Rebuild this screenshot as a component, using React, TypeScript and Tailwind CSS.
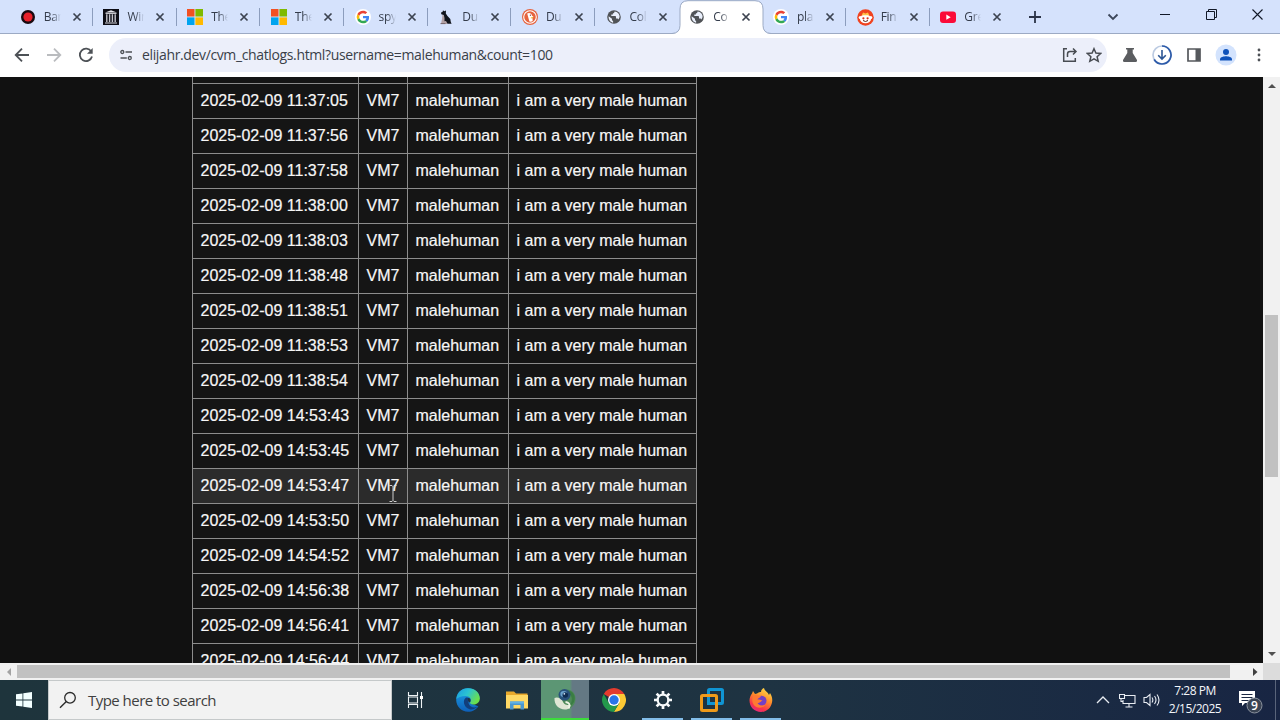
import type { ReactNode } from "react";

const UI = "font-['Open_Sans','Noto_Sans',sans-serif]";

/* ---------- favicons ---------- */

const RecordIcon = () => (
  <svg width="16" height="16" viewBox="0 0 16 16">
    <circle cx="8" cy="8" r="7" fill="#1a0a10" />
    <circle cx="8" cy="8" r="4.6" fill="#e8212b" />
  </svg>
);

const ArchiveIcon = () => (
  <svg width="16" height="16" viewBox="0 0 16 16">
    <rect width="16" height="16" fill="#0c0c14" />
    <path d="M8 1.2 14 3.6H2z" fill="#e4e4ea" />
    <path d="M2.5 4.4h11M2 14h12" stroke="#d8d8de" strokeWidth="1" />
    <path d="M3.8 5.2v7.8M6.6 5.2v7.8M9.4 5.2v7.8M12.2 5.2v7.8" stroke="#c4c4cc" strokeWidth="1.4" />
  </svg>
);

const MicrosoftIcon = () => (
  <svg width="16" height="16" viewBox="0 0 16 16">
    <rect width="7.5" height="7.5" fill="#f25022" />
    <rect x="8.4" width="7.6" height="7.5" fill="#7fba00" />
    <rect y="8.4" width="7.5" height="7.6" fill="#00a4ef" />
    <rect x="8.4" y="8.4" width="7.6" height="7.6" fill="#ffb900" />
  </svg>
);

const GoogleIcon = () => (
  <svg width="16" height="16" viewBox="0 0 48 48">
    <circle cx="24" cy="24" r="24" fill="#fff" />
    <g transform="translate(5 5) scale(.79)">
      <path fill="#EA4335" d="M24 9.5c3.54 0 6.71 1.22 9.21 3.6l6.85-6.85C35.9 2.38 30.47 0 24 0 14.62 0 6.51 5.38 2.56 13.22l7.98 6.19C12.43 13.72 17.74 9.5 24 9.5z" />
      <path fill="#4285F4" d="M46.98 24.55c0-1.57-.15-3.09-.38-4.55H24v9.02h12.94c-.58 2.96-2.26 5.48-4.78 7.18l7.73 6c4.51-4.18 7.09-10.36 7.09-17.65z" />
      <path fill="#FBBC05" d="M10.53 28.59a14.5 14.5 0 0 1 0-9.18l-7.98-6.19a24 24 0 0 0 0 21.56l7.98-6.19z" />
      <path fill="#34A853" d="M24 48c6.48 0 11.93-2.13 15.89-5.81l-7.73-6c-2.15 1.45-4.92 2.3-8.16 2.3-6.26 0-11.57-4.22-13.47-9.91l-7.98 6.19C6.51 42.62 14.62 48 24 48z" />
    </g>
  </svg>
);

const DogIcon = () => (
  <svg width="16" height="16" viewBox="0 0 16 16">
    <path d="M4.500 5 4 10l-1 5h6l2-3z" fill="#b3a2a6" />
    <path d="M3 3.500 4.500 3 5 1.200 6.200 2.300 8 1.500l-.2 3L9.500 7l2.800 3 .5 3 .8 1.800H9.500L8 12l-1.500.3V9L5.800 6 3.300 5.200z" fill="#10141c" />
    <path d="M2.500 14.600h5" stroke="#74656a" />
  </svg>
);

const DuckIcon = () => (
  <svg width="16" height="16" viewBox="0 0 16 16">
    <circle cx="8" cy="8" r="8" fill="#e6643f" />
    <circle cx="8" cy="8" r="6.3" fill="none" stroke="#fff" strokeWidth="1.1" />
    <path d="M5.2 4.6c2-1.200 4.500-.2 4.800 2.200l1.400.8-1 1.200.3 3.300c-1 .6-2.400.8-3.300.5z" fill="#fff" />
    <path d="m8.800 8.400 2.600-.6-.4 1.200-2.200.5z" fill="#f8b933" />
    <circle cx="8.400" cy="6.200" r=".6" fill="#693b32" />
  </svg>
);

const GlobeIcon = () => (
  <svg width="16" height="16" viewBox="0 0 16 16">
    <circle cx="8" cy="8" r="6.8" fill="#505357" />
    <path d="M2.600 7.200 6 9.700v1.100c0 .7.500 1.200 1.100 1.200v1.700C4.600 13.300 2.400 11 2.600 7.200z" fill="#e9effb" />
    <path d="M8.600 2.400c-.3 1.300-.6 1.800-1.700 1.900v1.300H5.300v1.500h4c.5 0 .7.300.7.800v1.500h1c.7 0 1.200.5 1.300 1 .8-.9 1.300-2 1.300-3.200 0-2.300-1.900-4.400-5-4.800z" fill="#e9effb" />
  </svg>
);

const RedditIcon = () => (
  <svg width="17" height="17" viewBox="0 0 17 17">
    <circle cx="8.500" cy="8.500" r="8.300" fill="#f0431f" />
    <ellipse cx="8.500" cy="9.800" rx="5.600" ry="4.400" fill="#fff" />
    <circle cx="3.200" cy="8.600" r="1.500" fill="#fff" />
    <circle cx="13.800" cy="8.600" r="1.500" fill="#fff" />
    <path d="M4.800 6.200 6 3.600l2.500 1 2.500-1 1.200 2.600z" fill="#ffc248" />
    <circle cx="6.400" cy="9.300" r="1.100" fill="#d9321b" />
    <circle cx="10.600" cy="9.300" r="1.100" fill="#d9321b" />
    <path d="M6 11.500q2.500 2 5 0" fill="none" stroke="#5b2218" strokeWidth="1" />
  </svg>
);

const YoutubeIcon = () => (
  <svg width="16" height="16" viewBox="0 0 16 16">
    <rect y="2.500" width="16" height="11.500" rx="3" fill="#fb0b38" />
    <path d="m6.300 5.600 4.400 2.600-4.400 2.600z" fill="#fff" />
  </svg>
);

const Cross = () => (
  <svg width="10" height="10" viewBox="0 0 10 10" className="shrink-0">
    <path d="m1.500 1.500 7 7m0-7-7 7" stroke="#3c4350" strokeWidth="1.700" />
  </svg>
);

type TabInfo = { label: string; icon: ReactNode; sep?: boolean; active?: boolean };

const tabs: TabInfo[] = [
  { label: "Bar", icon: <RecordIcon />, sep: true },
  { label: "Win", icon: <ArchiveIcon />, sep: true },
  { label: "The", icon: <MicrosoftIcon />, sep: true },
  { label: "The", icon: <MicrosoftIcon />, sep: true },
  { label: "spy", icon: <GoogleIcon />, sep: true },
  { label: "Du", icon: <DogIcon />, sep: true },
  { label: "Du", icon: <DuckIcon />, sep: true },
  { label: "Col", icon: <GlobeIcon /> },
  { label: "Co", icon: <GlobeIcon />, active: true },
  { label: "pla", icon: <GoogleIcon />, sep: true },
  { label: "Fin", icon: <RedditIcon />, sep: true },
  { label: "Gre", icon: <YoutubeIcon /> },
];

function Tab({ label, icon, sep, active }: TabInfo) {
  return (
    <div className="relative flex h-[34px] w-[83.7px] shrink-0 items-center pl-[10.5px]">
      {active && (
        <svg className="absolute -left-[7px] top-0" width="100" height="34" viewBox="0 0 100 34">
          <path d="M0 34q8-.5 8-8V9q0-8 8-8h67q8 0 8 8v17q0 7.500 8 8z" fill="#fff" />
          <path d="M0 33.500q8-.5 8-8V9q0-8.300 8-8.300h67q8 0 8 8.300v16.500q0 7.500 8 8" fill="none" stroke="#9caac4" />
        </svg>
      )}
      <div className="relative flex w-[17px] shrink-0">{icon}</div>
      <div className="relative ml-[7px] w-[17px] shrink-0 overflow-hidden whitespace-nowrap text-[12px] leading-4 tracking-[-0.3px] text-[#343c4b] [mask-image:linear-gradient(to_right,#000_45%,transparent)]">
        {label}
      </div>
      <div className="relative ml-[11px] flex">
        <Cross />
      </div>
      {sep && <div className="absolute right-0 top-[8px] h-[18px] w-px bg-[#8c9dbd]" />}
    </div>
  );
}

function TabStrip() {
  return (
    <div className="flex h-[34px] shrink-0 border-b border-[#9caac4] bg-[#d5e2fc]">
      <div className="flex w-[1024px] shrink-0 pl-[9.3px]">
        {tabs.map((t, i) => (
          <Tab key={i} {...t} />
        ))}
      </div>
      <div className="flex flex-1 items-center">
        <svg width="22" height="14" viewBox="0 0 22 14" className="mt-px">
          <path d="M11 1v12M5 7h12" stroke="#2b3347" strokeWidth="1.800" />
        </svg>
        <svg width="12" height="10" viewBox="0 0 12 10" className="ml-[61px]">
          <path d="m1.500 2.500 4.500 4.500 4.500-4.500" fill="none" stroke="#3c4659" strokeWidth="1.800" />
        </svg>
        <svg width="10" height="10" viewBox="0 0 10 10" className="-mt-[5px] ml-[41px]">
          <path d="M0 5.500h10" stroke="#111827" />
        </svg>
        <svg width="11" height="11" viewBox="0 0 11 11" className="-mt-[5px] ml-[36px]">
          <path d="M.5 2.500h8v8h-8zM2.500 2.500v-2h8v8h-2" fill="none" stroke="#111827" />
        </svg>
        <svg width="11" height="11" viewBox="0 0 11 11" className="-mt-[5px] ml-[35px]">
          <path d="m.5.500 10 10m0-10-10 10" stroke="#111827" strokeWidth="1.100" />
        </svg>
      </div>
    </div>
  );
}

function Toolbar() {
  return (
    <div className="flex h-[43px] shrink-0 items-center bg-white pb-[2px]">
      <svg width="16" height="16" viewBox="0 0 16 16" className="ml-[14px]">
        <path d="M15 8H2M8 1.700 1.700 8 8 14.300" fill="none" stroke="#4d5156" strokeWidth="1.800" />
      </svg>
      <svg width="16" height="16" viewBox="0 0 16 16" className="ml-[16px]">
        <path d="M1 8h13M8 1.700 14.300 8 8 14.300" fill="none" stroke="#babcbf" strokeWidth="1.800" />
      </svg>
      <svg width="16" height="16" viewBox="0 0 16 16" className="ml-[16px]">
        <path d="M13.300 4.600A6.200 6.200 0 1 0 14 9.500" fill="none" stroke="#4d5156" strokeWidth="1.800" />
        <path d="M14.700 1v5.700H9z" fill="#4d5156" />
      </svg>
      <div className="ml-[15px] flex h-[34px] w-[998px] shrink-0 items-center rounded-full bg-[#eceffa] pl-[11px]">
        <svg width="13" height="12" viewBox="0 0 13 12">
          <g fill="none" stroke="#4d5156" strokeWidth="1.300">
            <circle cx="2.300" cy="3" r="1.500" />
            <path d="M5.500 3H12M.5 9h6.300" />
            <circle cx="9.800" cy="9" r="1.500" />
          </g>
        </svg>
        <span className="ml-[9px] w-[411px] whitespace-nowrap text-[14px] tracking-[-0.365px] text-[#3a3f49]">
          elijahr.dev/cvm_chatlogs.html?username=malehuman&amp;count=100
        </span>
        <svg width="16" height="16" viewBox="0 0 16 16" className="ml-[509px]">
          <g fill="none" stroke="#484c52" strokeWidth="1.500">
            <path d="M5 1.700H1.700v12.600h11.600V11" />
            <path d="M5.500 10V7q0-2.500 2.500-2.500h6M11 1.500l3 3-3 3" />
          </g>
        </svg>
        <svg width="16" height="16" viewBox="0 0 16 16" className="ml-[8px]">
          <path d="m8 1.700 1.900 4.400 4.800.4-3.600 3.200 1.100 4.600L8 11.800l-4.200 2.500 1.100-4.600-3.600-3.200 4.800-.4z" fill="none" stroke="#484c52" strokeWidth="1.500" />
        </svg>
      </div>
      <svg width="16" height="16" viewBox="0 0 16 16" className="ml-[15px]">
        <path d="M4 1h8v1.500h-1.300V6L15 13q.6 2-1.300 2H2.300Q.4 15 1 13l4.300-7V2.500H4z" fill="#5b5d60" />
      </svg>
      <svg width="20" height="20" viewBox="0 0 20 20" className="ml-[14px]">
        <circle cx="10" cy="10" r="9" fill="none" stroke="#bccbe2" strokeWidth="1.700" />
        <path d="M10 1a9 9 0 1 1-7.800 13.500" fill="none" stroke="#2d5ba9" strokeWidth="1.700" />
        <path d="M10 5v9M6.200 10.200 10 14l3.800-3.800" fill="none" stroke="#2c5594" strokeWidth="1.600" />
      </svg>
      <svg width="14" height="14" viewBox="0 0 14 14" className="ml-[15px]">
        <path d="M1 1h12v12H1z" fill="none" stroke="#55585c" strokeWidth="1.700" />
        <path d="M8.500 1H13v12H8.500z" fill="#55585c" />
      </svg>
      <svg width="22" height="22" viewBox="0 0 22 22" className="ml-[14px]">
        <circle cx="11" cy="11" r="10.500" fill="#d3e3fd" />
        <circle cx="11" cy="8" r="3" fill="#0f52ba" />
        <path d="M5 16.500v-1.300C5 13 9 12.300 11 12.300s6 .7 6 2.900v1.300z" fill="#0f52ba" />
      </svg>
      <svg width="4" height="14" viewBox="0 0 4 14" className="ml-[19.5px]">
        <g fill="#4d5156">
          <circle cx="2" cy="2" r="1.400" />
          <circle cx="2" cy="7" r="1.400" />
          <circle cx="2" cy="12" r="1.400" />
        </g>
      </svg>
    </div>
  );
}

/* ---------- chat log page ---------- */

const times = [
  "11:37:05", "11:37:56", "11:37:58", "11:38:00", "11:38:03", "11:38:48",
  "11:38:51", "11:38:53", "11:38:54", "14:53:43", "14:53:45", "14:53:47",
  "14:53:50", "14:54:52", "14:56:38", "14:56:41", "14:56:44",
];

const HOVERED = "14:53:47";

function ChatLog() {
  return (
    <div className="flex h-[586px] flex-1 flex-col overflow-hidden bg-[#111111]">
      <div className="ml-[192px] w-[505px] border-l border-[#8d8d8d] bg-[#151515] font-['Liberation_Sans',Arial,sans-serif] text-[16px] text-[#f7f7f7] [-webkit-text-stroke:0.2px_#f7f7f7] [&_span]:border-b [&_span]:border-r [&_span]:border-[#8d8d8d] [&_span]:pl-[7.5px]">
        <div className="grid h-[7px] grid-cols-[166px_49px_101px_188px]">
          <span />
          <span />
          <span />
          <span />
        </div>
        {times.map((t) => (
          <div
            key={t}
            className={
              "grid h-[35px] grid-cols-[166px_49px_101px_188px] whitespace-nowrap leading-[34px] " +
              (t === HOVERED ? "bg-[#2b2b2b]" : "")
            }
          >
            <span>2025-02-09 {t}</span>
            <span className="relative">
              VM7
              {t === HOVERED && (
                <svg className="absolute left-[30px] top-[16px]" width="8" height="17" viewBox="0 0 8 17">
                  <path d="M.5.500h2.500l1 1 1-1h2.500M.5 16.500h2.500l1-1 1 1h2.500M4 1.500v14" fill="none" stroke="#e0e0e0" strokeWidth=".9" />
                </svg>
              )}
            </span>
            <span>malehuman</span>
            <span>i am a very male human</span>
          </div>
        ))}
      </div>
    </div>
  );
}

function VerticalScrollbar() {
  return (
    <div className="flex w-[17px] flex-col items-center bg-[#f1f1f1]">
      <svg width="8" height="4" viewBox="0 0 8 4" className="mt-[7px]">
        <path d="m0 4 4-4 4 4z" fill="#505050" />
      </svg>
      <div className="mt-[227px] h-[162px] w-[13px] bg-[#c1c1c1]" />
      <svg width="8" height="4" viewBox="0 0 8 4" className="mb-[7px] mt-auto">
        <path d="m0 0 4 4 4-4z" fill="#505050" />
      </svg>
    </div>
  );
}

function HorizontalScrollbar() {
  return (
    <div className="flex h-[17px] shrink-0 items-center bg-[#f1f1f1]">
      <svg width="4" height="8" viewBox="0 0 4 8" className="ml-[7px]">
        <path d="M4 0 0 4l4 4z" fill="#a3a3a3" />
      </svg>
      <div className="ml-[6px] h-[13px] w-[1213px] bg-[#c1c1c1]" />
      <svg width="5" height="8" viewBox="0 0 5 8" className="ml-[23px]">
        <path d="m0 0 4.500 4L0 8z" fill="#404040" />
      </svg>
      <div className="ml-auto h-full w-[17px] bg-[#dcdcdc]" />
    </div>
  );
}

/* ---------- taskbar icons ---------- */

const TaskViewIcon = () => (
  <svg width="17" height="16" viewBox="0 0 17 16">
    <g fill="none" stroke="#eef3f5" strokeWidth="1.100">
      <path d="M1.500 0v3.500h9V0M1.500 16v-3.500h9V16M1.500 5h9v6h-9zM14.500 0v16" />
    </g>
    <path d="M13 4h3v3h-3z" fill="#fff" />
  </svg>
);

const EdgeIcon = () => (
  <svg width="24" height="24" viewBox="0 0 24 24">
    <defs>
      <linearGradient id="edgeTop" x1="0" y1="0" x2="1" y2=".5">
        <stop offset="0" stopColor="#199be2" />
        <stop offset=".5" stopColor="#2bc3d2" />
        <stop offset="1" stopColor="#6be04c" />
      </linearGradient>
      <linearGradient id="edgeBody" x1="0" y1="0" x2="0" y2="1">
        <stop offset="0" stopColor="#1ca4e8" />
        <stop offset="1" stopColor="#0e5fb8" />
      </linearGradient>
    </defs>
    <path d="M.2 12C.2 5 5 .2 12 .2c7 0 11.800 4.800 11.800 10.300L16 16l6.300 2.200c-2 3.400-6 5.600-10.300 5.600C5.500 23.800.2 18.500.2 12z" fill="url(#edgeBody)" />
    <path d="M.4 11C1 4.600 6 .2 12 .2c7 0 11.800 4.800 11.800 10.300 0 3.600-2.800 6-6 6-3 0-4.300-1.200-3.600-2.300 2-2.600-.2-6.200-4.600-6.200C5 8 1.800 9.500.4 11z" fill="url(#edgeTop)" />
    <path d="M10 9.500c-3.600 2.500-2.700 9.600 3.600 11.800 3 .8 6.300-.8 8.400-2.700-4 1.800-8.600.4-9.400-3.400-.4-2 .5-3.300 1.200-3.900-1-1.500-2.500-2-3.800-1.800z" fill="#123f7c" />
    <path d="M13.800 14.600c1.600-2.200.6-4.300-1.300-4.900-1 1.600-.6 4 1.300 4.900z" fill="#1f3440" />
  </svg>
);

const FolderIcon = () => (
  <svg width="22" height="20" viewBox="0 0 22 20">
    <path d="M0 1.500h8l2 2h11.500V18H0z" fill="#e9a92c" />
    <path d="M0 5h22v13.500H0z" fill="#ffd965" />
    <path d="M4 19.500v-8h14v8h-3.500V15h-7v4.500z" fill="#4b97cf" />
    <path d="M4 11.500h14v2H4z" fill="#62b2e5" />
  </svg>
);

const FrogIcon = () => (
  <svg width="24" height="24" viewBox="0 0 24 24">
    <path d="M14 2.500c5 0 8.500 4 8.500 9 0 6-4 10.500-9 10.500L9 16z" fill="#4e8a58" />
    <path d="M15.500 7c4 1 4.500 7 1 12 4-1.500 6-5.500 5-10-1-3-3-5-6-5.500z" fill="#3a7d43" />
    <path d="M1.500 11c-.5 6.500 4 11.500 10.500 11.500 3.500 0 5.500-2 5.500-4.500-5 .5-7-1.500-8-4C8 11 4 9.500 1.500 11z" fill="#dfe6d4" />
    <path d="M12.500 15c3 .5 5.500 2 3 6.500" fill="none" stroke="#eff5e6" strokeWidth="1.800" />
    <ellipse cx="11.500" cy="7.800" rx="6" ry="5.800" fill="#28517a" />
    <ellipse cx="10.800" cy="7" rx="3.500" ry="3" fill="#6ba2cc" />
    <circle cx="12.300" cy="8" r="2.800" fill="#102c50" />
    <circle cx="11.300" cy="6.800" r=".9" fill="#d5eafa" />
  </svg>
);

const ChromeIcon = () => (
  <svg width="24" height="24" viewBox="0 0 24 24">
    <path d="M12 12 1.780 5.900A11.900 11.900 0 0 1 22.300 6H12z" fill="#e33b2e" />
    <path d="M12 6h10.300A11.900 11.900 0 0 1 11.900 23.900L17.200 15z" fill="#fcc934" />
    <path d="M1.780 5.900A11.900 11.900 0 0 0 11.900 23.900L17.200 15H6.800z" fill="#23984b" />
    <circle cx="12" cy="12" r="6" fill="#fff" />
    <circle cx="12" cy="12" r="4.700" fill="#2874e8" />
  </svg>
);

const GearIcon = () => (
  <svg width="20" height="20" viewBox="0 0 20 20">
    <circle cx="10" cy="10" r="5.300" fill="none" stroke="#f7fafb" strokeWidth="2.300" />
    <path d="M10 1v4M10 15v4M1 10h4M15 10h4M3.600 3.600l2.900 2.900M13.500 13.500l2.900 2.900M3.600 16.400l2.900-2.900M13.500 6.500l2.900-2.900" stroke="#f7fafb" strokeWidth="2.700" />
    <circle cx="10" cy="10" r="4.100" fill="#1f3542" />
  </svg>
);

const VmwareIcon = () => (
  <svg width="24" height="24" viewBox="0 0 24 24">
    <rect x="8.500" y="1.500" width="14" height="14" rx="1" fill="none" stroke="#1095d4" strokeWidth="3" />
    <rect x="1.500" y="7.500" width="15" height="15" rx="1" fill="none" stroke="#f09a1a" strokeWidth="3" />
    <path d="M8.500 10v5.500H15" fill="none" stroke="#1095d4" strokeWidth="3" />
    <path d="M16.500 13v5" stroke="#f09a1a" strokeWidth="3" />
  </svg>
);

const FirefoxIcon = () => (
  <svg width="24" height="24" viewBox="0 0 24 24">
    <defs>
      <linearGradient id="fox" x1=".8" y1="0" x2=".3" y2="1">
        <stop offset="0" stopColor="#ffe04a" />
        <stop offset=".45" stopColor="#ff8a2a" />
        <stop offset=".8" stopColor="#f8334c" />
        <stop offset="1" stopColor="#e42a80" />
      </linearGradient>
    </defs>
    <path d="M3 5.500 4 3l2 3 2-.5q2-2 4-1.500C12 2 13.500.500 15 0c.5 3 4 4 5 7l1-2c2 3 2.700 6 2 9.500C22 20 17.500 24 12 24 5.500 24 .500 19 .500 12.500.500 10 1.500 7.500 3 5.500z" fill="url(#fox)" />
    <circle cx="12.500" cy="12.800" r="5" fill="#7440c5" />
    <path d="M4 8c3-2 5 0 8 0-1 2-3 2-3.500 3.500 2 0 4 0 5 1.500-2 0-2 2-5 2 1 2.500 5 3.500 8 1.500-2 4-9 4.500-12 0C3 14 3 10.500 4 8z" fill="#ff7a32" />
  </svg>
);

function AppSlot({ children, running }: { children: ReactNode; running?: boolean }) {
  return (
    <div className="relative flex h-10 w-[49px] shrink-0 items-center justify-center">
      {children}
      {running && <div className="absolute bottom-0 left-[4px] h-[2px] w-[41px] bg-[#82bde9]" />}
    </div>
  );
}

function Taskbar() {
  return (
    <div className="flex h-10 shrink-0 bg-linear-to-r from-[#1e343c] via-[#1e3342] via-60% to-[#182543]">
      <div className="flex w-12 shrink-0 items-center justify-center">
        <svg width="16" height="16" viewBox="0 0 16 16">
          <path d="m0 2.300 6.500-.9v6.200H0zM7.300 1.300 16 0v7.600H7.300zM0 8.400h6.500v6.200L0 13.700zM7.300 8.400H16V16l-8.700-1.300z" fill="#f3ffff" />
        </svg>
      </div>
      <div className="flex w-[344px] shrink-0 items-center border border-[#c5c9ca] bg-[#f2f2f2] pl-[10px]">
        <svg width="18" height="18" viewBox="0 0 18 18">
          <circle cx="11" cy="6.800" r="5.300" fill="none" stroke="#2b2b2b" strokeWidth="1.300" />
          <path d="M7.300 10.500 1 16.800" stroke="#2b2b2b" strokeWidth="1.400" />
        </svg>
        <span className="ml-[11px] whitespace-nowrap text-[15px] tracking-[-0.53px] text-[#404040]">Type here to search</span>
      </div>
      <div className="flex w-[649px] shrink-0">
        <div className="flex w-[51px] items-center pl-[15px]">
          <TaskViewIcon />
        </div>
        <AppSlot><EdgeIcon /></AppSlot>
        <AppSlot><FolderIcon /></AppSlot>
        <div className="flex h-10 w-[48px] shrink-0 items-center justify-center border-b-2 border-[#3ddc3c] bg-linear-to-r from-[#5c9674] from-60% to-[#647984] to-65%">
          <FrogIcon />
        </div>
        <AppSlot><ChromeIcon /></AppSlot>
        <AppSlot running><GearIcon /></AppSlot>
        <AppSlot running><VmwareIcon /></AppSlot>
        <AppSlot running><FirefoxIcon /></AppSlot>
      </div>
      <div className="flex flex-1 items-center pl-[55px]">
        <svg width="14" height="8" viewBox="0 0 14 8">
          <path d="m1 7 6-6 6 6" fill="none" stroke="#e8ecf2" strokeWidth="1.300" />
        </svg>
        <svg width="17" height="15" viewBox="0 0 17 15" className="ml-[9px]">
          <g fill="none" stroke="#e8ecf2" strokeWidth="1.100">
            <path d="M6 2.500h10v8H4V7M10 10.500V14M6.500 14h7M.5 1.500h5v4h-5zM2 5.500v3h2" />
          </g>
        </svg>
        <svg width="18" height="16" viewBox="0 0 18 16" className="ml-[7px]">
          <g fill="none" stroke="#e8ecf2" strokeWidth="1.100">
            <path d="M1 5.500h2.500L7 2.500v11l-3.500-3H1zM9 5.500q1.700 2.500 0 5M11.500 4q3 4 0 8M14 2.500q4 5.500 0 11" />
          </g>
        </svg>
        <div className="ml-[4px] flex w-[60px] shrink-0 flex-col items-center whitespace-nowrap text-[12px] leading-[18px] tracking-[-0.5px] text-[#f4f6fa]">
          <span>7:28 PM</span>
          <span>2/15/2025</span>
        </div>
        <div className="relative ml-[11px] mt-[3px] h-[26px] w-[27px] shrink-0">
          <svg width="27" height="26" viewBox="0 0 27 26">
            <path d="M3 2h16v12H9l-3 3v-3H3z" fill="#fff" />
            <path d="M5.500 5.500h11M5.500 8.500h11M5.500 11.500h7" stroke="#1b2843" strokeWidth="1.100" />
            <circle cx="18.500" cy="16.500" r="7.500" fill="#394353" stroke="#8b929e" />
          </svg>
          <span className="absolute left-[14px] top-[9px] w-[9px] text-center text-[12px] font-semibold leading-[15px] text-white">9</span>
        </div>
        <div className="ml-auto mr-[4px] h-full w-px bg-[#59647a]" />
      </div>
    </div>
  );
}

export default function App() {
  return (
    <div className={"flex h-[720px] w-[1280px] flex-col overflow-hidden bg-white " + UI}>
      <TabStrip />
      <Toolbar />
      <div className="flex h-[586px] shrink-0">
        <ChatLog />
        <VerticalScrollbar />
      </div>
      <HorizontalScrollbar />
      <Taskbar />
    </div>
  );
}
